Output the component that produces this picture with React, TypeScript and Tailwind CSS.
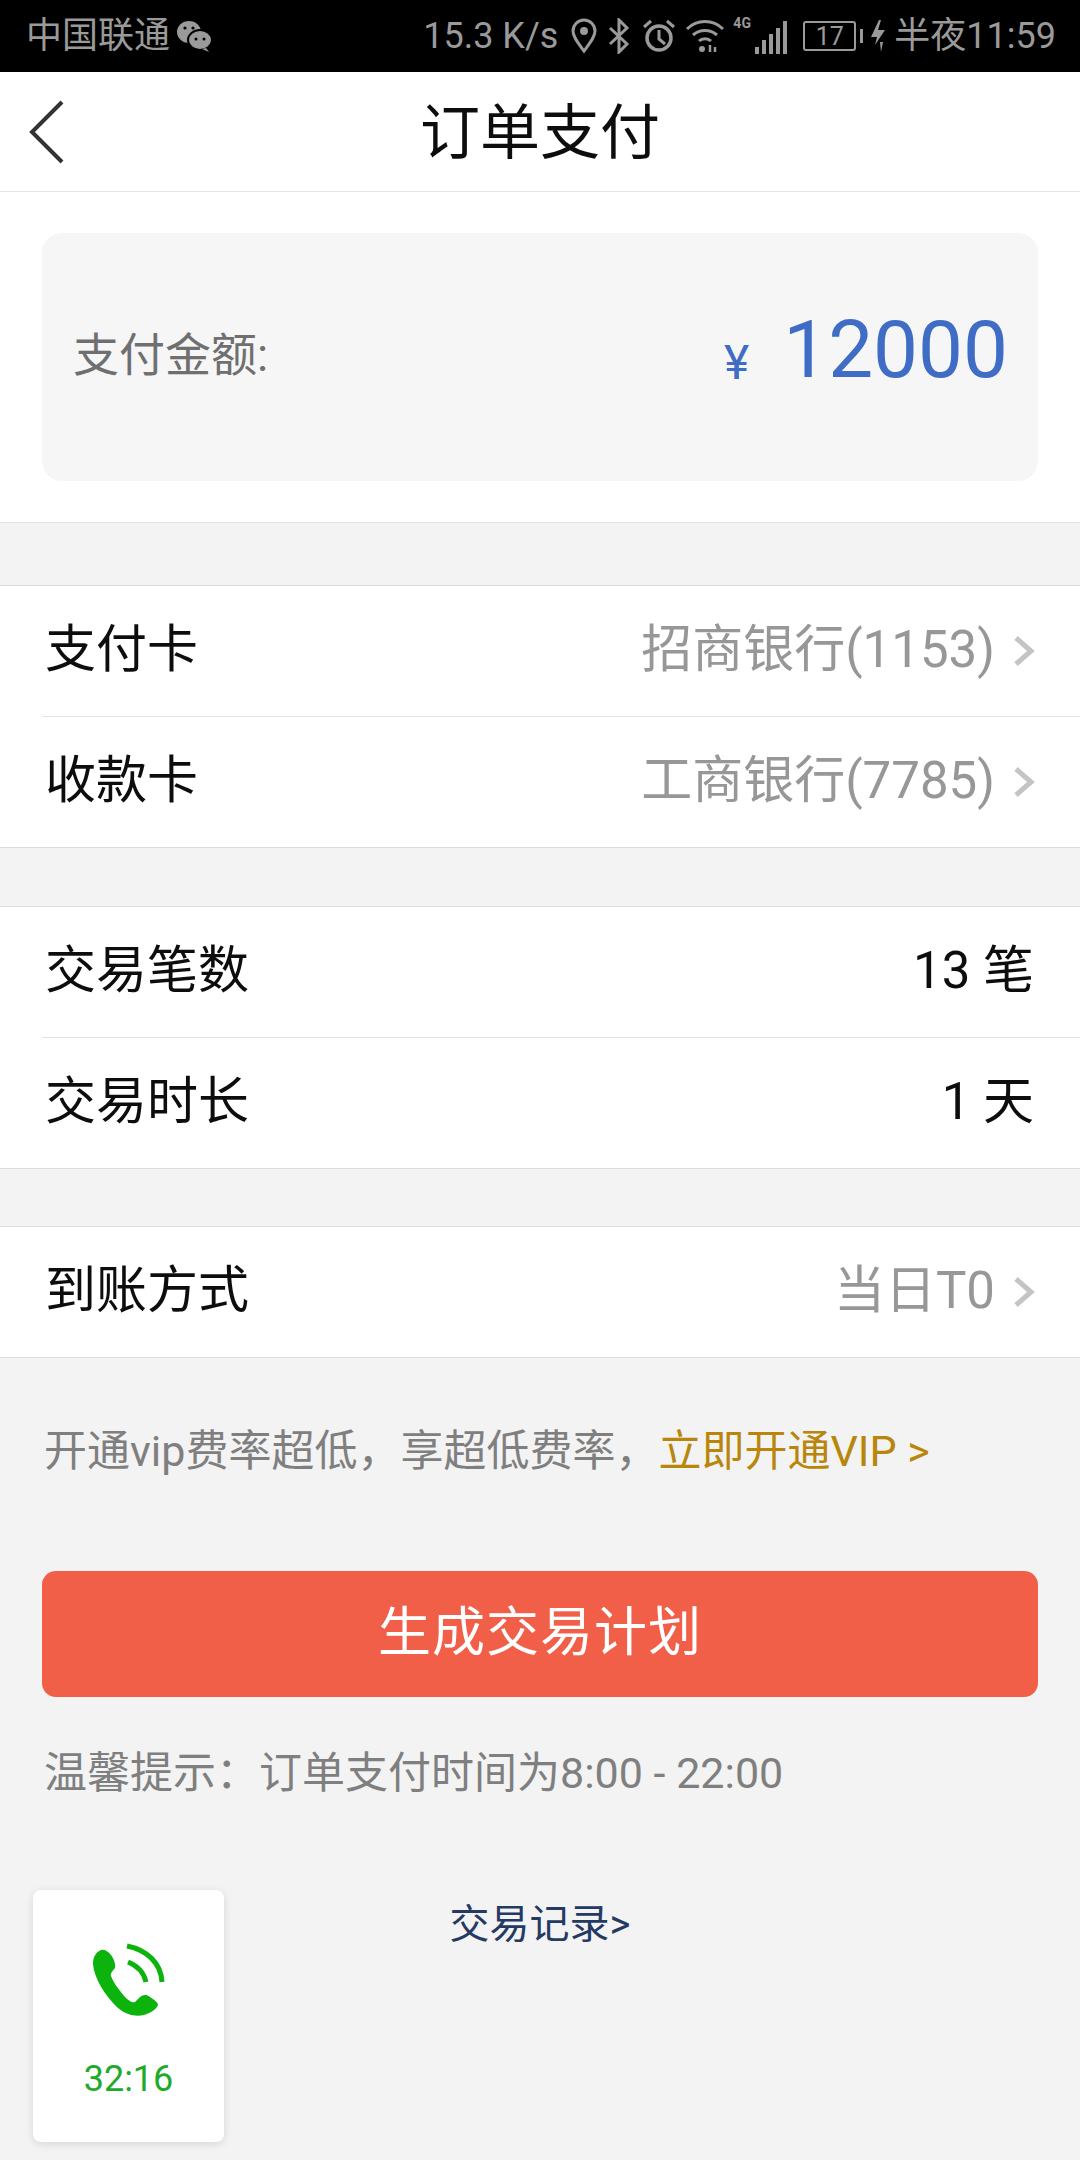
const FONT = "font-['Roboto','Noto_Sans_CJK_SC',sans-serif]";

const Row = ({ label, value, arrow, divider, height }: { label: string; value: string; arrow?: boolean; divider?: boolean; height: string }) => (
  <div className="pl-[42px]">
    <div className={`flex items-center justify-between pb-[4px] pl-[3px] pr-[46px] ${height} ${divider ? 'border-b border-[#e2e2e2]' : ''}`}>
      <span className="text-[51px] leading-none text-[#0d0d0d]">{label}</span>
      <span className={`flex items-center text-[51px] leading-none ${arrow ? 'text-[#979797]' : 'text-[#0d0d0d]'}`}>
        {value}
        {arrow && (
          <svg width="22" height="32" viewBox="0 0 22 32" fill="none" stroke="#c4c4c4" strokeWidth="5" className="ml-[18px] mt-[3px] -mr-[1px]">
            <path d="M3 3l15 13L3 29" />
          </svg>
        )}
      </span>
    </div>
  </div>
);

const Section = ({ children }: { children: React.ReactNode }) => (
  <section className="border-y border-[#dcdcdc] bg-white">{children}</section>
);

// status bar glyphs
const StatusIcons = () => (
  <div className="flex items-center text-[#9a9a9a]">
    <svg width="26" height="36" viewBox="0 0 26 36" fill="none" stroke="currentColor" strokeWidth="3" className="ml-[13px]">
      <path d="M13 33C7 25 2 19 2 13a11 11 0 0 1 22 0c0 6-5 12-11 20z" />
      <circle cx="13" cy="13" r="2.5" fill="currentColor" />
    </svg>
    <svg width="22" height="36" viewBox="0 0 22 36" fill="none" stroke="currentColor" strokeWidth="3" className="ml-[11px]">
      <path d="M2 10l17 16-8 8V2l8 8L2 26" />
    </svg>
    <svg width="34" height="36" viewBox="0 0 34 36" fill="none" stroke="currentColor" strokeWidth="3.5" className="ml-[12px]">
      <circle cx="17" cy="20" r="12" />
      <path d="M17 12v9l6 5M2 9l7-6M32 9l-7-6" strokeWidth="3" />
    </svg>
    <svg width="40" height="36" viewBox="0 0 40 36" fill="none" stroke="currentColor" strokeWidth="3" className="ml-[9px]">
      <path d="M2 11c10-10 26-10 36 0M8 17c7-6 17-6 24 0M14 23c3-3 9-3 12 0" />
      <circle cx="17" cy="31" r="3" fill="currentColor" stroke="none" />
      <path d="M25 34V27M30 34v-5" strokeWidth="2.5" />
    </svg>
    <div className="relative ml-[8px] h-[36px] w-[54px]">
      <span className="absolute left-0 top-[-2px] text-[14px] font-bold leading-[14px]">4G</span>
      <div className="absolute bottom-0 right-0 flex items-end gap-[3px]">
        <div className="h-[7px] w-[4px] bg-current" />
        <div className="h-[14px] w-[4px] bg-current" />
        <div className="h-[20px] w-[4px] bg-current" />
        <div className="h-[26px] w-[4px] bg-current" />
        <div className="h-[33px] w-[4px] bg-current" />
      </div>
    </div>
    <div className="ml-[16px] flex h-[30px] w-[53px] items-center justify-center rounded-[3px] border-2 border-current text-[25px] leading-none">17</div>
    <div className="ml-[4px] h-[14px] w-[3px] bg-current" />
    <svg width="19" height="34" viewBox="0 0 19 34" fill="currentColor" className="ml-[5px]">
      <path d="M11 1L3 18h6L7 26l10-15h-7l3-10z" />
      <path d="M12 23l1 10 2-10z" />
    </svg>
  </div>
);

const PhoneIcon = () => (
  <svg width="73" height="74" viewBox="0 0 73 74" fill="none">
    <path
      d="M9 7C4 9 1 14 1 21C2 35 13 53 26 65C34 72 44 74 52 72C58 70 64 67 66 62C66 59 62 57 58 54C54 51 51 52 48 54L43 59C40 60 37 58 33 54C27 47 21 39 19 33C18 30 21 28 23 25C24 22 22 16 19 12C16 8 12 6 9 7Z"
      fill="#0cb30c"
    />
    <path d="M35 3C55 7 69 20 70 39M36 19C46 23 52 30 54 39" stroke="#0cb30c" strokeWidth="5" />
  </svg>
);

export default function App() {
  return (
    <div className={`relative h-[2160px] w-[1080px] overflow-hidden bg-[#f3f3f3] ${FONT}`}>
      {/* status bar */}
      <div className="flex h-[72px] items-center justify-between bg-black pl-[26px] pr-[24px] text-[#9a9a9a]">
        <div className="flex items-center">
          <span className="text-[36px] leading-none">中国联通</span>
          <svg width="36" height="32" viewBox="0 0 36 32" fill="currentColor" className="ml-[6px]">
            <ellipse cx="13" cy="12" rx="12" ry="11" />
            <ellipse cx="24" cy="20" rx="12" ry="10" stroke="#000" strokeWidth="2" />
            <path d="M30 28l3 4-7-3z" />
            <circle cx="9" cy="8" r="1.6" fill="#000" />
            <circle cx="17" cy="8" r="1.6" fill="#000" />
            <circle cx="20" cy="19" r="1.5" fill="#000" />
            <circle cx="28" cy="19" r="1.5" fill="#000" />
          </svg>
        </div>
        <div className="flex items-center">
          <span className="text-[36px] leading-none">15.3 K/s</span>
          <StatusIcons />
          <span className="ml-[7px] text-[36px] leading-none">半夜11:59</span>
        </div>
      </div>

      {/* header */}
      <header className="relative flex h-[120px] items-center justify-center border-b border-[#e4e4e4] bg-white pt-[5px]">
        <svg width="36" height="64" viewBox="0 0 36 64" fill="none" stroke="#333" strokeWidth="4" className="absolute left-[29px] top-[28px]">
          <path d="M33 2L3 32l30 30" />
        </svg>
        <h1 className="text-[60px] font-normal leading-none text-[#0d0d0d]">订单支付</h1>
      </header>

      {/* amount */}
      <div className="border-b border-[#e2e2e2] bg-white px-[42px] py-[41px]">
        <div className="flex h-[248px] items-center justify-between rounded-[20px] bg-[#f6f6f7] pl-[31px] pr-[30px]">
          <span className="mb-[5px] text-[46px] leading-none text-[#6f6f6f]">支付金额:</span>
          <span className="mb-[14px] flex items-baseline text-[#3f6cc4]">
            <span className="mr-[34px] translate-y-[2px] text-[48px] leading-none">¥</span>
            <span className="text-[80px] leading-none">12000</span>
          </span>
        </div>
      </div>

      <div className="mt-[62px]">
        <Section>
          <Row label="支付卡" value="招商银行(1153)" arrow divider height="h-[131px]" />
          <Row label="收款卡" value="工商银行(7785)" arrow height="h-[130px]" />
        </Section>
      </div>
      <div className="mt-[58px]">
        <Section>
          <Row label="交易笔数" value="13 笔" divider height="h-[131px]" />
          <Row label="交易时长" value="1 天" height="h-[130px]" />
        </Section>
      </div>
      <div className="mt-[57px]">
        <Section>
          <Row label="到账方式" value="当日T0" arrow height="h-[130px]" />
        </Section>
      </div>

      <p className="mt-[67px] px-[44px] text-[43px] leading-[52px] text-[#7f7f7f]">
        开通vip费率超低，享超低费率，<span className="text-[#b8860b]">立即开通VIP &gt;</span>
      </p>

      <div className="mx-[42px] mt-[94px] flex h-[126px] items-center justify-center rounded-[14px] bg-[#f25f49] text-[53px] tracking-[1px] text-white">
        生成交易计划
      </div>

      <p className="mt-[50px] px-[44px] text-[43px] leading-[52px] text-[#7f7f7f]">温馨提示：订单支付时间为8:00 - 22:00</p>

      <p className="mt-[101px] text-center text-[40px] leading-[50px] text-[#253a63]">交易记录&gt;</p>

      {/* floating call widget */}
      <div className="absolute left-[33px] top-[1890px] flex h-[252px] w-[191px] flex-col items-center rounded-[8px] bg-white pt-[53px] shadow-[0_2px_8px_rgba(0,0,0,0.12)]">
        <PhoneIcon />
        <span className="mt-[44px] text-[36px] leading-none text-[#1eaa2a]">32:16</span>
      </div>
    </div>
  );
}
